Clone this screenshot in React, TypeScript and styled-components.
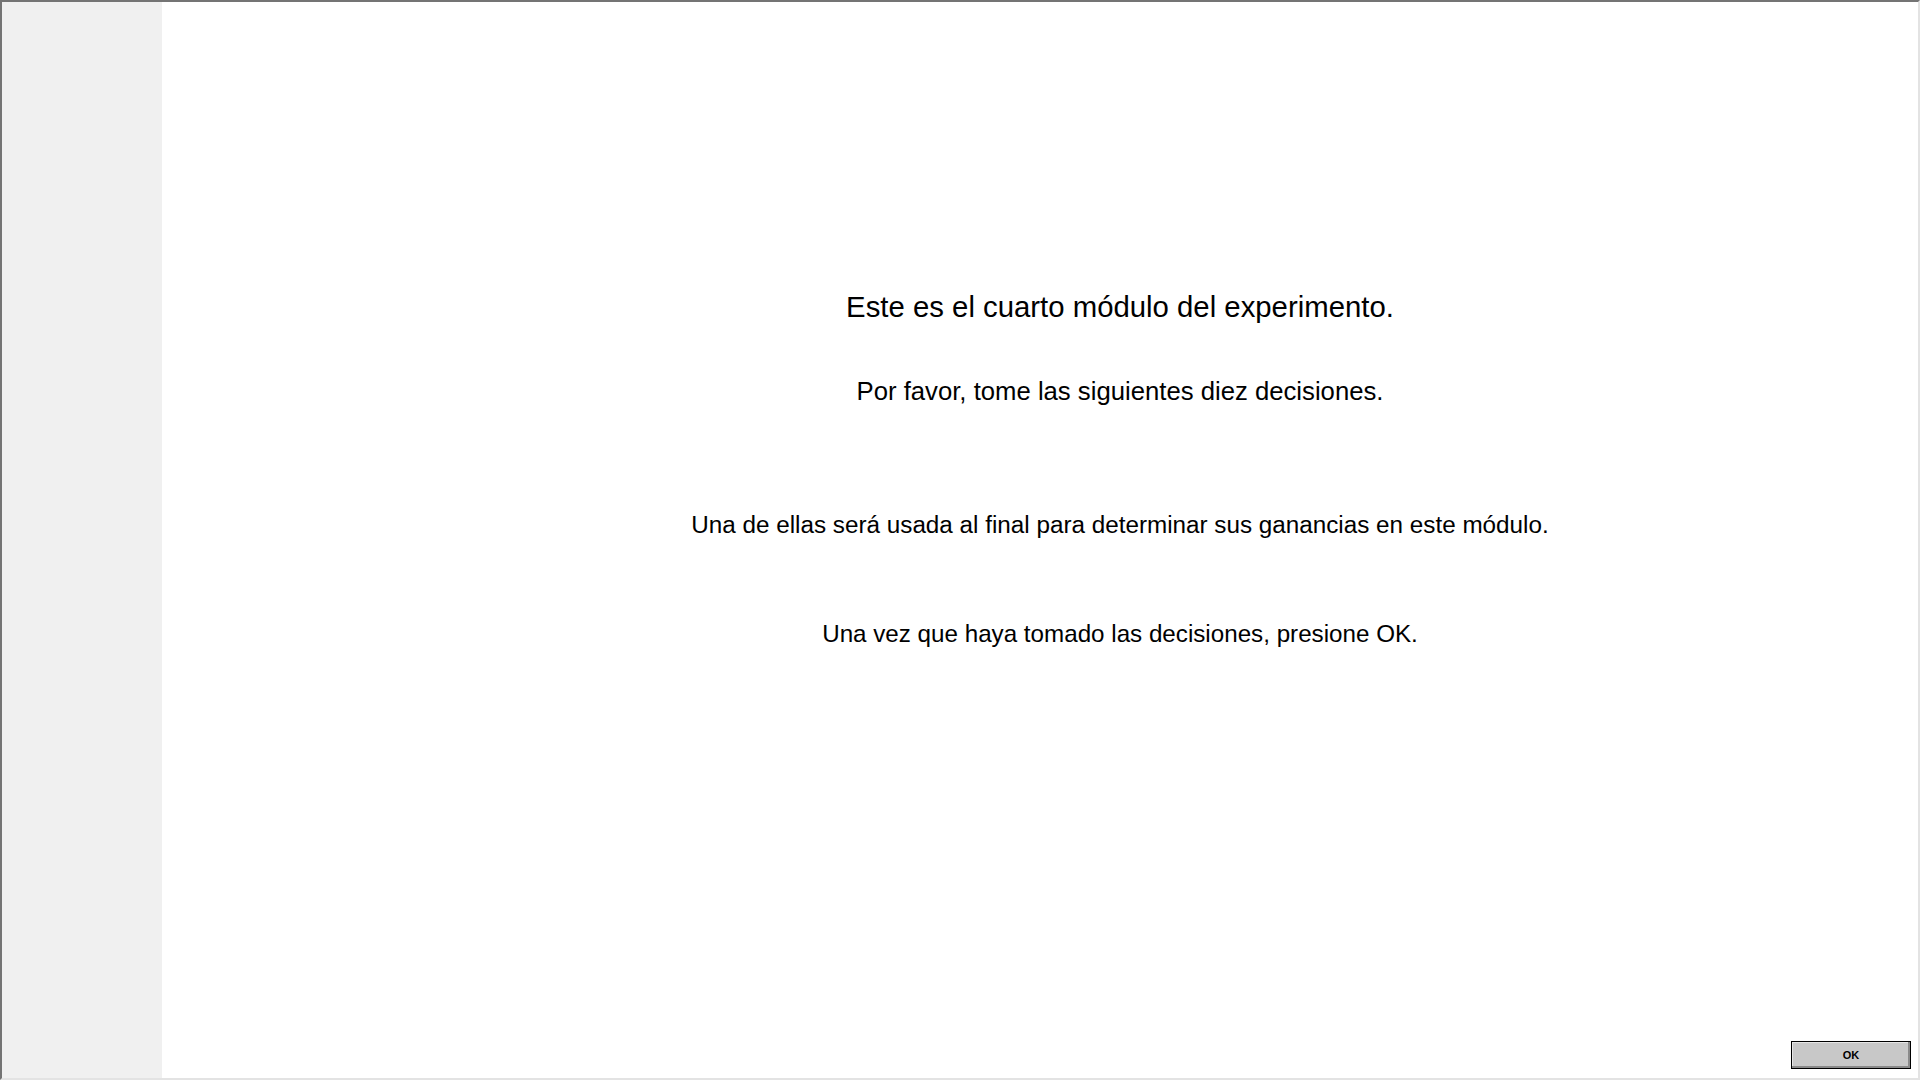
import React from "react";
import styled, { createGlobalStyle } from "styled-components";

const GlobalStyle = createGlobalStyle`
  html, body {
    margin: 0;
    padding: 0;
    background: #ffffff;
  }
  body {
    font-family: "Liberation Sans", Arial, sans-serif;
    color: #000;
  }
`;

const Frame = styled.div`
  box-sizing: border-box;
  width: 1920px;
  height: 1080px;
  display: flex;
  border-style: solid;
  border-width: 2px;
  border-color: #747474 #e3e3e3 #e3e3e3 #747474;
  overflow: hidden;
`;

const Sidebar = styled.div`
  width: 160px;
  flex-shrink: 0;
  background: #f0f0f0;
`;

const Main = styled.div`
  flex: 1;
  display: flex;
  flex-direction: column;
  background: #ffffff;
`;

const Content = styled.div`
  flex: 1;
  display: flex;
  flex-direction: column;
  align-items: center;
  padding: 288px 0 0 160px;
`;

const Line = styled.div<{ $size: number; $height: number; $gap: number }>`
  font-size: ${p => p.$size}px;
  line-height: ${p => p.$height}px;
  margin-top: ${p => p.$gap}px;
  white-space: nowrap;
  text-align: center;
`;

const Footer = styled.div`
  display: flex;
  justify-content: flex-end;
  padding: 0 7px 9px 0;
`;

const OkButton = styled.button`
  box-sizing: border-box;
  width: 120px;
  height: 28px;
  background: #c8c8c8;
  border: 1px solid #000;
  box-shadow: inset -2px -2px 0 #8a8a8a, inset 1px 1px 0 #e6e6e6;
  font-family: "Liberation Sans", Arial, sans-serif;
  font-size: 11px;
  font-weight: bold;
  color: #000;
  padding: 0;
`;

const App: React.FC = () => (
  <>
    <GlobalStyle />
    <Frame>
      <Sidebar />
      <Main>
        <Content>
          <Line $size={29.33} $height={34} $gap={0}>
            Este es el cuarto módulo del experimento.
          </Line>
          <Line $size={25.7} $height={30} $gap={52}>
            Por favor, tome las siguientes diez decisiones.
          </Line>
          <Line $size={24.25} $height={28} $gap={105}>
            Una de ellas será usada al final para determinar sus ganancias en este módulo.
          </Line>
          <Line $size={24.2} $height={28} $gap={81}>
            Una vez que haya tomado las decisiones, presione OK.
          </Line>
        </Content>
        <Footer>
          <OkButton>OK</OkButton>
        </Footer>
      </Main>
    </Frame>
  </>
);

export default App;
